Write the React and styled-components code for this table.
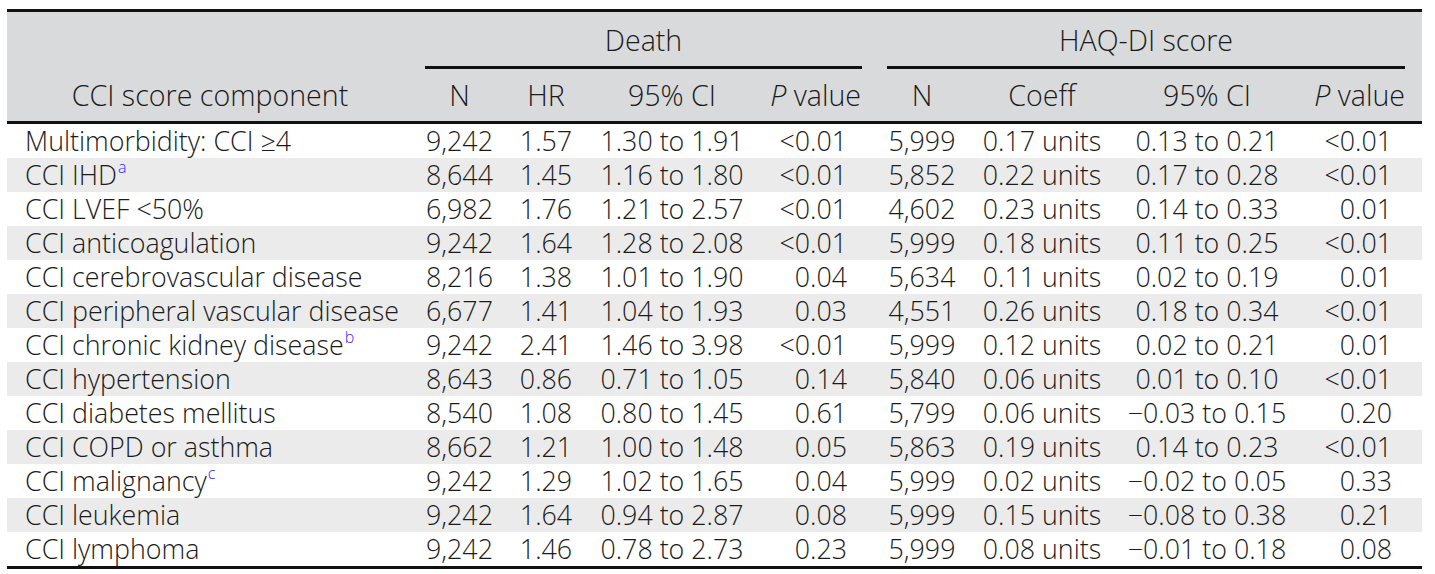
import React from "react";
import styled, { createGlobalStyle } from "styled-components";

const GlobalStyle = createGlobalStyle`
  body {
    margin: 0;
    background: #ffffff;
    font-family: "Open Sans", "Liberation Sans", sans-serif;
    color: #1b1b1b;
  }
`;

const COLORS = {
  head: "#d9dadc",
  stripe: "#ebebeb",
  rule: "#111111",
  note: "#2f2ff5",
};

const rows = [
  ["Multimorbidity: CCI \u22654", null, "9,242", "1.57", "1.30 to 1.91", "<0.01", "5,999", "0.17 units", "0.13 to 0.21", "<0.01"],
  ["CCI IHD", "a", "8,644", "1.45", "1.16 to 1.80", "<0.01", "5,852", "0.22 units", "0.17 to 0.28", "<0.01"],
  ["CCI LVEF <50%", null, "6,982", "1.76", "1.21 to 2.57", "<0.01", "4,602", "0.23 units", "0.14 to 0.33", "0.01"],
  ["CCI anticoagulation", null, "9,242", "1.64", "1.28 to 2.08", "<0.01", "5,999", "0.18 units", "0.11 to 0.25", "<0.01"],
  ["CCI cerebrovascular disease", null, "8,216", "1.38", "1.01 to 1.90", "0.04", "5,634", "0.11 units", "0.02 to 0.19", "0.01"],
  ["CCI peripheral vascular disease", null, "6,677", "1.41", "1.04 to 1.93", "0.03", "4,551", "0.26 units", "0.18 to 0.34", "<0.01"],
  ["CCI chronic kidney disease", "b", "9,242", "2.41", "1.46 to 3.98", "<0.01", "5,999", "0.12 units", "0.02 to 0.21", "0.01"],
  ["CCI hypertension", null, "8,643", "0.86", "0.71 to 1.05", "0.14", "5,840", "0.06 units", "0.01 to 0.10", "<0.01"],
  ["CCI diabetes mellitus", null, "8,540", "1.08", "0.80 to 1.45", "0.61", "5,799", "0.06 units", "\u22120.03 to 0.15", "0.20"],
  ["CCI COPD or asthma", null, "8,662", "1.21", "1.00 to 1.48", "0.05", "5,863", "0.19 units", "0.14 to 0.23", "<0.01"],
  ["CCI malignancy", "c", "9,242", "1.29", "1.02 to 1.65", "0.04", "5,999", "0.02 units", "\u22120.02 to 0.05", "0.33"],
  ["CCI leukemia", null, "9,242", "1.64", "0.94 to 2.87", "0.08", "5,999", "0.15 units", "\u22120.08 to 0.38", "0.21"],
  ["CCI lymphoma", null, "9,242", "1.46", "0.78 to 2.73", "0.23", "5,999", "0.08 units", "\u22120.01 to 0.18", "0.08"],
];

const widths = [418, 69, 104, 148, 116, 25, 70, 170, 160, 118, 17];

const App = () => {
  return (
    <Page>
      <GlobalStyle />
      <Table>
        <colgroup>
          {widths.map((w, i) => (
            <col key={i} style={{ width: w }} />
          ))}
        </colgroup>
        <thead>
          <tr>
            <HeadCell rowSpan={2} $top $bottom $pr={12}>
              CCI score component
            </HeadCell>
            <GroupCell colSpan={4}>Death</GroupCell>
            <HeadCell rowSpan={2} $top $bottom />
            <GroupCell colSpan={4}>HAQ-DI score</GroupCell>
            <HeadCell rowSpan={2} $top $bottom />
          </tr>
          <tr>
            <HeadCell $bottom>N</HeadCell>
            <HeadCell $bottom>HR</HeadCell>
            <HeadCell $bottom>95% CI</HeadCell>
            <HeadCell $bottom $align="right" $pr={1}>
              <Ital>P</Ital> value
            </HeadCell>
            <HeadCell $bottom>N</HeadCell>
            <HeadCell $bottom>Coeff</HeadCell>
            <HeadCell $bottom>95% CI</HeadCell>
            <HeadCell $bottom $align="right">
              <Ital>P</Ital> value
            </HeadCell>
          </tr>
        </thead>
        <tbody>
          {rows.map(([label, note, ...vals], i) => (
            <Row key={label} $striped={i % 2 === 1}>
              <LabelCell>
                {label}
                {note && <Note>{note}</Note>}
              </LabelCell>
              <Cell>{vals[0]}</Cell>
              <Cell>{vals[1]}</Cell>
              <Cell>{vals[2]}</Cell>
              <Cell $align="right" $pr={15}>
                {vals[3]}
              </Cell>
              <Cell />
              <Cell>{vals[4]}</Cell>
              <Cell>{vals[5]}</Cell>
              <Cell>{vals[6]}</Cell>
              <Cell $align="right" $pr={13}>
                {vals[7]}
              </Cell>
              <Cell />
            </Row>
          ))}
        </tbody>
      </Table>
    </Page>
  );
};

export default App;

const Page = styled.div`
  padding: 9px 0 0 7px;
`;

const Table = styled.table`
  width: 1415px;
  table-layout: fixed;
  border-collapse: separate;
  border-spacing: 0;
  font-size: 26.8px;
  line-height: 34px;
  font-weight: 300;
`;

//////////////header
const HeadCell = styled.th`
  background: ${COLORS.head};
  font-weight: 300;
  font-size: 28.6px;
  text-align: ${(p) => p.$align || "center"};
  vertical-align: bottom;
  padding: 9px ${(p) => p.$pr || 0}px 9px 0;
  white-space: nowrap;
  border-top: ${(p) => (p.$top ? `3px solid ${COLORS.rule}` : "none")};
  border-bottom: ${(p) => (p.$bottom ? `3px solid ${COLORS.rule}` : "none")};
`;

const GroupCell = styled.th`
  background: ${COLORS.head};
  font-weight: 300;
  font-size: 28.6px;
  text-align: center;
  padding: 11px 0 9px;
  border-top: 3px solid ${COLORS.rule};
  border-bottom: 3px solid ${COLORS.rule};
  white-space: nowrap;
`;

const Ital = styled.i`
  font-style: italic;
`;
//////////////header ends

// body rows
const Row = styled.tr`
  background: ${(p) => (p.$striped ? COLORS.stripe : "#ffffff")};

  &:last-child td {
    border-bottom: 3px solid ${COLORS.rule};
  }
`;

const Cell = styled.td`
  height: 34px;
  padding: 0 ${(p) => p.$pr || 0}px 0 0;
  text-align: ${(p) => p.$align || "center"};
  white-space: nowrap;
`;

const LabelCell = styled(Cell)`
  text-align: left;
  padding-left: 18px;
`;

const Note = styled.sup`
  display: inline-block;
  font-size: 16px;
  line-height: 12px;
  vertical-align: 12px;
  color: ${COLORS.note};
  margin-left: 1px;
`;
